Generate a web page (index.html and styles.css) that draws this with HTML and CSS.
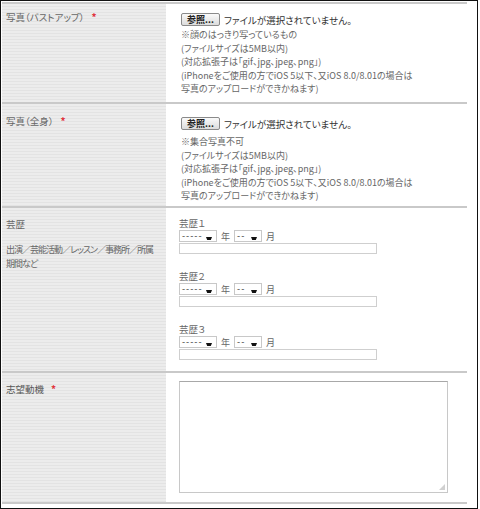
FILE: index.html
```html
<!DOCTYPE html>
<html lang="ja">
<head>
<meta charset="utf-8">
<link rel="stylesheet" href="styles.css">
</head>
<body>
<div class="frame">
  <div class="table">
    <div class="row r1">
      <div class="label"><span class="lt">写真（バストアップ）</span><span class="req">*</span></div>
      <div class="field">
        <div class="file"><span class="btn">参照...</span><span class="nofile">ファイルが選択されていません。</span></div>
        <div class="notes">※顔のはっきり写っているもの<br>(ファイルサイズは5MB以内)<br>(対応拡張子は「gif、jpg、jpeg、png」)<br>(iPhoneをご使用の方でiOS 5以下、又iOS 8.0/8.01の場合は<br>写真のアップロードができかねます)</div>
      </div>
    </div>
    <div class="row r2">
      <div class="label"><span class="lt">写真（全身）</span><span class="req">*</span></div>
      <div class="field">
        <div class="file"><span class="btn">参照...</span><span class="nofile">ファイルが選択されていません。</span></div>
        <div class="notes">※集合写真不可<br>(ファイルサイズは5MB以内)<br>(対応拡張子は「gif、jpg、jpeg、png」)<br>(iPhoneをご使用の方でiOS 5以下、又iOS 8.0/8.01の場合は<br>写真のアップロードができかねます)</div>
      </div>
    </div>
    <div class="row r3">
      <div class="label">
        <div class="lt">芸歴</div>
        <div class="sub">出演／芸能活動／レッスン／事務所／所属<br>期間など</div>
      </div>
      <div class="field">
        <div class="career">
          <div class="ctitle">芸歴１</div>
          <div class="dates"><span class="sel w1">-----</span><span class="unit">年</span><span class="sel w2">--</span><span class="unit">月</span></div>
          <div class="txt"></div>
        </div>
        <div class="career">
          <div class="ctitle">芸歴２</div>
          <div class="dates"><span class="sel w1">-----</span><span class="unit">年</span><span class="sel w2">--</span><span class="unit">月</span></div>
          <div class="txt"></div>
        </div>
        <div class="career">
          <div class="ctitle">芸歴３</div>
          <div class="dates"><span class="sel w1">-----</span><span class="unit">年</span><span class="sel w2">--</span><span class="unit">月</span></div>
          <div class="txt"></div>
        </div>
      </div>
    </div>
    <div class="row r4">
      <div class="label"><span class="lt dark">志望動機</span><span class="req">*</span></div>
      <div class="field">
        <div class="textarea"><span class="grip"></span></div>
      </div>
    </div>
  </div>
</div>
</body>
</html>
```
FILE: styles.css
```css
* { box-sizing: border-box; }
html, body { margin: 0; padding: 0; background: #fff; }
body {
  font-family: "Noto Sans CJK JP", "Noto Sans", sans-serif;
  font-feature-settings: "palt";
  font-size: 9.5px;
  color: #555;
}
.frame {
  width: 478px;
  height: 509px;
  border: 1px solid #111;
  padding: 1px 0 0 1px;
  background: #fff;
}
.table {
  width: 465px;
  border-top: 2px solid #c9c9c9;
}
.row {
  display: flex;
  border-bottom: 2px solid #c9c9c9;
}
.r1 { height: 100px; }
.r2 { height: 104px; }
.r3 { height: 165px; }
.r4 { height: 131px; }
.label {
  width: 164px;
  flex: none;
  padding: 6px 0 0 4px;
  line-height: 14px;
  background: repeating-linear-gradient(to bottom, #ececec 0, #ececec 2px, #e3e3e3 2px, #e3e3e3 3px);
  color: #666;
}
.lt { color: #666; }
.lt.dark { color: #555; }
.req { color: #e0343c; margin-left: 7px; font-size: 10px; font-weight: bold; }
.field {
  flex: 1;
  padding: 9px 0 0 13px;
}
.file { display: flex; align-items: center; height: 13px; }
.btn {
  margin-left: 2px;
  width: 39px;
  height: 13px;
  border: 1px solid #8a8a8a;
  border-radius: 2px;
  background: linear-gradient(#fafafa, #dcdcdc);
  color: #222;
  font-weight: bold;
  font-size: 9px;
  line-height: 11px;
  text-align: center;
}
.nofile { margin-left: 4px; color: #333; font-size: 9.5px; }
.notes {
  margin-top: 2px;
  margin-left: 2px;
  line-height: 13.5px;
  color: #666;
  font-size: 9px;
}
.r2 .label { padding-top: 10px; }
.r2 .field { padding-top: 13px; }
.r2 .notes { margin-top: 5px; }
.r3 .label { padding-top: 9px; }
.sub { margin-top: 12px; line-height: 13.5px; font-size: 9px; letter-spacing: -1px; white-space: nowrap; }
.r3 .field { padding-top: 9px; }
.career { margin-bottom: 16px; }
.ctitle { line-height: 13px; color: #666; }
.dates { display: flex; align-items: center; height: 12px; }
.sel {
  position: relative;
  height: 12px;
  border: 1px solid #c8c8c8;
  color: #333;
  font-size: 9px;
  line-height: 9px;
  padding-left: 2px;
  letter-spacing: 1px;
}
.sel::after {
  content: "";
  position: absolute;
  right: 4px;
  bottom: 1px;
  width: 6px;
  height: 3px;
  background: #111;
  clip-path: polygon(0 0, 100% 0, 80% 100%, 20% 100%);
}
.w1 { width: 38px; }
.w2 { width: 28px; }
.unit { margin: 0 4px 0 4px; color: #666; font-size: 9px; }
.txt {
  margin-top: 1px;
  width: 198px;
  height: 11px;
  border: 1px solid #cfcfcf;
}
.r4 .label { padding-top: 9px; }
.r4 .field { padding-top: 8px; }
.textarea {
  position: relative;
  width: 269px;
  height: 112px;
  border: 1px solid #c8c8c8;
  border-top-color: #a8a8a8;
}
.grip {
  position: absolute;
  right: 2px;
  bottom: 2px;
  width: 6px;
  height: 6px;
  background: radial-gradient(circle, #999 0.6px, transparent 0.8px) 0 0 / 2px 2px;
  clip-path: polygon(100% 0, 100% 100%, 0 100%);
}
```
